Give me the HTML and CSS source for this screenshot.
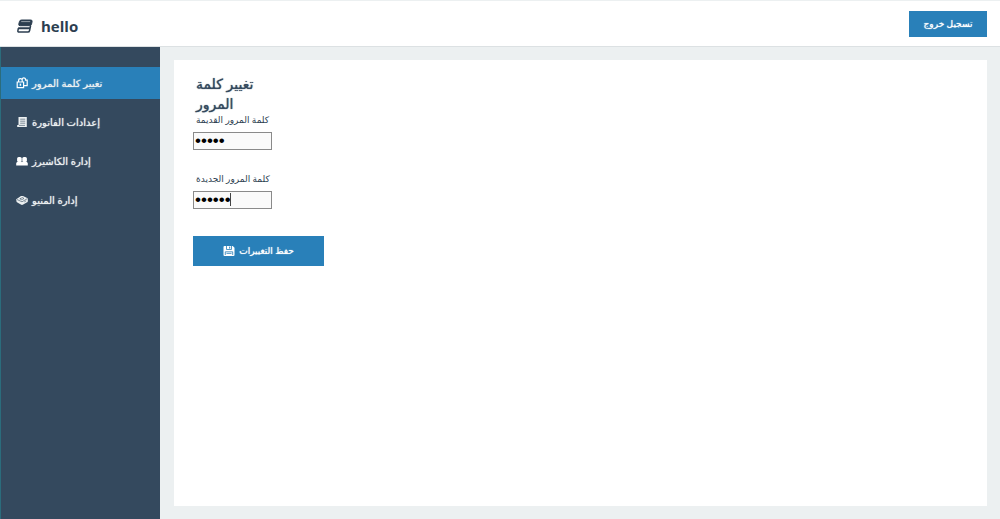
FILE: index.html
```html
<!DOCTYPE html>
<html lang="ar">
<head>
  <meta charset="UTF-8">
  <meta name="viewport" content="width=device-width, initial-scale=1.0">
  <title>hello</title>
  <link rel="stylesheet" href="styles.css">
</head>
<body>
  <header class="topbar">
    <div class="brand">
      <svg class="brand-icon" viewBox="0 0 16 14" aria-hidden="true">
        <path d="M4.5 1h9.2q1.8 0 1.4 1.6l-.6 2.6q-.4 1.5-1.8 1.5H3.2q-1.8 0-1.4-1.6l.7-2.7Q2.9 1 4.5 1z" fill="#2c3e50" stroke="#2c3e50"/>
        <path d="M4.2 2.6h9" stroke="#fff" stroke-width="0.5"/>
        <path d="M13.6 6.5l-1 5q-.3 1.6-1.8 1.6H2.2q-1.6 0-1.3-1.5l.5-2.4" fill="none" stroke="#2c3e50" stroke-width="1.5"/>
        <path d="M1.2 8.3h12l-.4 2H1z" fill="#2c3e50"/>
      </svg>
      <span>hello</span>
    </div>
    <button type="button" class="btn btn-logout" dir="rtl">تسجيل خروج</button>
  </header>

  <div class="layout">
    <nav class="sidebar">
      <a href="#password" class="nav-link active">
        <svg class="icon" viewBox="0 0 12 12" aria-hidden="true">
          <path d="M1.2 5h6.4v5.6H1.2zM2.6 5V3.3q0-1.6 1.8-1.6t1.8 1.6V5M6.2 3V2q.2-1.2 1.6-1.2T9.5 2v1.1h1.7v5.6H8" fill="none" stroke="#fff" stroke-width="1.2"/>
          <path d="M4.4 6.6v2.2" stroke="#fff" stroke-width="1.5"/>
        </svg>
        <span dir="rtl">تغيير كلمة المرور</span>
      </a>
      <a href="#invoice" class="nav-link">
        <svg class="icon" viewBox="0 0 12 12" aria-hidden="true">
          <path d="M2.5 1h8.3v10H1.2V9h1.3z" fill="#ecf0f1"/>
          <path d="M4.2 3.2h5M4.2 5.2h5M4.2 7.2h5M3 9.4h6" stroke="#34495e" stroke-width="0.6"/>
        </svg>
        <span dir="rtl">إعدادات الفاتورة</span>
      </a>
      <a href="#cashiers" class="nav-link">
        <svg class="icon" viewBox="0 0 12 12" aria-hidden="true">
          <g fill="#fff">
            <rect x="1.1" y="2" width="4.6" height="5" rx="1.6"/>
            <rect x="6.3" y="2" width="4.6" height="5" rx="1.6"/>
            <path d="M.2 10.4V8.2q0-1.4 2.2-1.8h2.2q1 .2 1.4.8.4-.6 1.4-.8h2.2q2.2.4 2.2 1.8v2.2z"/>
          </g>
        </svg>
        <span dir="rtl">إدارة الكاشيرز</span>
      </a>
      <a href="#menu" class="nav-link">
        <svg class="icon" viewBox="0 0 12 12" aria-hidden="true">
          <path d="M.2 5.2L5 2.1q1-.4 2 0l4.6 2.2q.5 2.4 0 3.6L7.2 10.6q-1.2.6-2.4 0L.6 8z" fill="#ecf0f1"/>
          <path d="M1 5.5l5 2.3 5-3M3.8 4.8l2.8-1.3 1.4 1-2.4 1.2zM8.3 7.9l1.8-1.1" fill="none" stroke="#34495e" stroke-width="0.6"/>
        </svg>
        <span dir="rtl">إدارة المنيو</span>
      </a>
    </nav>

    <main class="content">
      <form class="card">
        <h1 class="title" dir="rtl">تغيير كلمة المرور</h1>
        <div class="field">
          <label for="oldPassword" dir="rtl">كلمة المرور القديمة</label>
          <input type="password" id="oldPassword" value="12345">
        </div>
        <div class="field">
          <label for="newPassword" dir="rtl">كلمة المرور الجديدة</label>
          <div class="input-wrap">
            <input type="password" id="newPassword" value="123456">
            <span class="caret"></span>
          </div>
        </div>
        <button type="button" class="btn btn-save">
          <svg class="icon" viewBox="0 0 12 12" aria-hidden="true">
            <path d="M1.5 1h8.2L11.5 2.8V10q0 1-1 1h-9q-1 0-1-1V2q0-1 1-1z" fill="#fff"/>
            <path d="M3.5 1v3.5h5V1M2.3 10V6.8h7.4V10M3.5 8.4h5" fill="none" stroke="#2980b9" stroke-width="0.8"/>
            <path d="M6.7 1.6v2" stroke="#2980b9"/>
          </svg>
          <span dir="rtl">حفظ التغييرات</span>
        </button>
      </form>
    </main>
  </div>
</body>
</html>
```

FILE: styles.css
```css
* {
  box-sizing: border-box;
}

body {
  margin: 0;
  min-height: 100vh;
  display: flex;
  flex-direction: column;
  font-family: "Open Sans", "DejaVu Sans", sans-serif;
  background-color: #ecf0f1;
  color: #2c3e50;
}

/* Header */
.topbar {
  display: flex;
  justify-content: space-between;
  align-items: center;
  height: 47px;
  padding: 0 13px 0 17px;
  background-color: #ffffff;
  border-top: 1px solid #ecf0f1;
  border-bottom: 1px solid #dce1e3;
}

.brand {
  display: flex;
  align-items: center;
  gap: 8px;
  padding-top: 4px;
  font-size: 15px;
  font-weight: bold;
  line-height: 20px;
}

.brand-icon {
  width: 16px;
  height: 14px;
}

.btn {
  border: none;
  background-color: #2980b9;
  color: #ffffff;
  font-family: inherit;
  font-size: 9px;
  line-height: 16px;
  text-shadow: 0 0 1px #ffffff;
  cursor: pointer;
}

.btn:hover {
  background-color: #3498db;
}

.btn-logout {
  width: 78px;
  height: 26px;
  padding: 0;
}

.icon {
  width: 12px;
  height: 12px;
  flex: none;
}

.layout {
  flex: 1;
  display: flex;
}

/* Sidebar */
.sidebar {
  display: flex;
  flex-direction: column;
  gap: 7px;
  width: 160px;
  padding-top: 20px;
  background-color: #34495e;
  border-left: 1px solid #2b6c7c;
}

.nav-link {
  display: flex;
  align-items: center;
  gap: 4px;
  height: 32px;
  padding-left: 15px;
  color: #ecf0f1;
  font-size: 10px;
  line-height: 16px;
  text-decoration: none;
  text-shadow: 0 0 1px #ecf0f1;
}

.nav-link.active {
  background-color: #2980b9;
}

/* Content */
.content {
  flex: 1;
  display: flex;
  padding: 13px 13px 13px 14px;
}

.card {
  flex: 1;
  padding: 14px 19px;
  background-color: #ffffff;
}

.title {
  width: 80px;
  margin: 0 0 0 3px;
  font-size: 14px;
  font-weight: normal;
  line-height: 20px;
  text-align: left;
  color: #34495e;
  text-shadow: 0 0 1px #34495e;
}

.field {
  display: flex;
  flex-direction: column;
  align-items: flex-start;
  gap: 6px;
  margin-bottom: 23px;
}

.field label {
  padding: 0 3px;
  font-size: 9px;
  line-height: 12px;
}

.field input {
  display: block;
  width: 79px;
  height: 18px;
  padding: 0 1px;
  border: 1px solid #8a8a8a;
  border-radius: 0;
  background-color: #fafafa;
  color: #000000;
  font-family: "Liberation Sans", sans-serif;
  font-size: 17px;
  line-height: 16px;
  outline: none;
}

.input-wrap {
  position: relative;
}

/* Text cursor of the field being edited */
.caret {
  position: absolute;
  top: 2px;
  left: 37px;
  width: 1px;
  height: 13px;
  background-color: #444444;
}

.btn-save {
  display: flex;
  justify-content: center;
  align-items: center;
  gap: 4px;
  width: 131px;
  height: 30px;
  margin-top: 27px;
  padding: 0;
}
```
